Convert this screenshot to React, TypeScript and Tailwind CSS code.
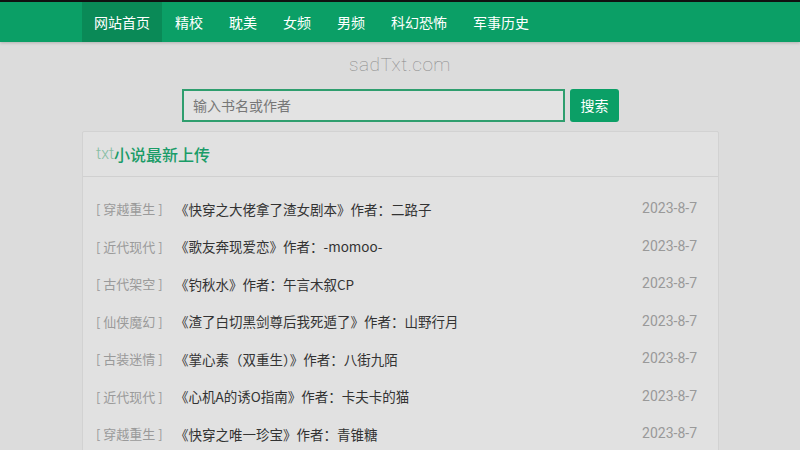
const navItems = ["网站首页", "精校", "耽美", "女频", "男频", "科幻恐怖", "军事历史"];

const books = [
  { cat: "穿越重生", title: "《快穿之大佬拿了渣女剧本》", author: "二路子" },
  { cat: "近代现代", title: "《歌友奔现爱恋》", author: "-momoo-" },
  { cat: "古代架空", title: "《钓秋水》", author: "午言木叙CP" },
  { cat: "仙侠魔幻", title: "《渣了白切黑剑尊后我死遁了》", author: "山野行月" },
  { cat: "古装迷情", title: "《掌心素（双重生）》", author: "八街九陌" },
  { cat: "近代现代", title: "《心机A的诱O指南》", author: "卡夫卡的猫" },
  { cat: "穿越重生", title: "《快穿之唯一珍宝》", author: "青锥糖" },
];

export default function App() {
  return (
    <div className="w-[800px] h-[450px] overflow-hidden bg-[#dcdcdc] font-['Noto_Sans_CJK_SC','Noto_Sans',sans-serif]">
      <nav className="h-[42px] bg-[#0b9f66] border-t-2 border-[#111] shadow-[0_1px_3px_rgba(0,0,0,0.2)]">
        <ul className="flex h-full pl-[82px] text-[14px] text-white">
          {navItems.map((item, i) => (
            <li
              key={item}
              className={`flex items-center ${i === 0 ? "bg-[#0a8a57] px-[12px]" : "px-[13px]"}`}
            >
              {item}
            </li>
          ))}
        </ul>
      </nav>

      <div className="text-center pt-[10px] text-[19px] font-thin text-[#8a8a8a] font-['Roboto',sans-serif] leading-[26px] tracking-[0.5px]">
        sadTxt.com
      </div>

      <div className="flex justify-center gap-[5px] mt-[11px] pl-[1px]">
        <div className="w-[383px] h-[33px] border-2 border-[#2f9e6e] bg-[#e3e3e3] flex items-center px-[9px] text-[14px] text-[#777]">
          输入书名或作者
        </div>
        <button className="w-[49px] h-[33px] rounded-[3px] bg-[#0b9f66] text-white text-[14px]">搜索</button>
      </div>

      <section className="mx-[82px] mt-[9px] w-[637px] bg-[#e1e1e1] border border-[#d2d2d2] rounded-[2px]">
        <div className="h-[45px] flex items-center px-[13px] border-b border-[#d0d0d0] text-[16px] font-medium text-[#1a9c68]">
          <span className="font-['Roboto',sans-serif] font-light text-[#86bda3]">txt</span>
          <span>小说最新上传</span>
        </div>
        <ul className="pt-[13px]">
          {books.map((b, i) => (
            <li key={i} className="h-[37.5px] flex items-center px-[13px] text-[13px]">
              <span className="w-[79px] text-[#9a9a9a]">[ {b.cat} ]</span>
              <span className="flex-1 text-[13.5px] text-[#333]">
                {b.title}作者：{b.author}
              </span>
              <span className="mr-[8px] text-[14px] text-[#999] font-['Roboto',sans-serif]">2023-8-7</span>
            </li>
          ))}
        </ul>
      </section>
    </div>
  );
}
